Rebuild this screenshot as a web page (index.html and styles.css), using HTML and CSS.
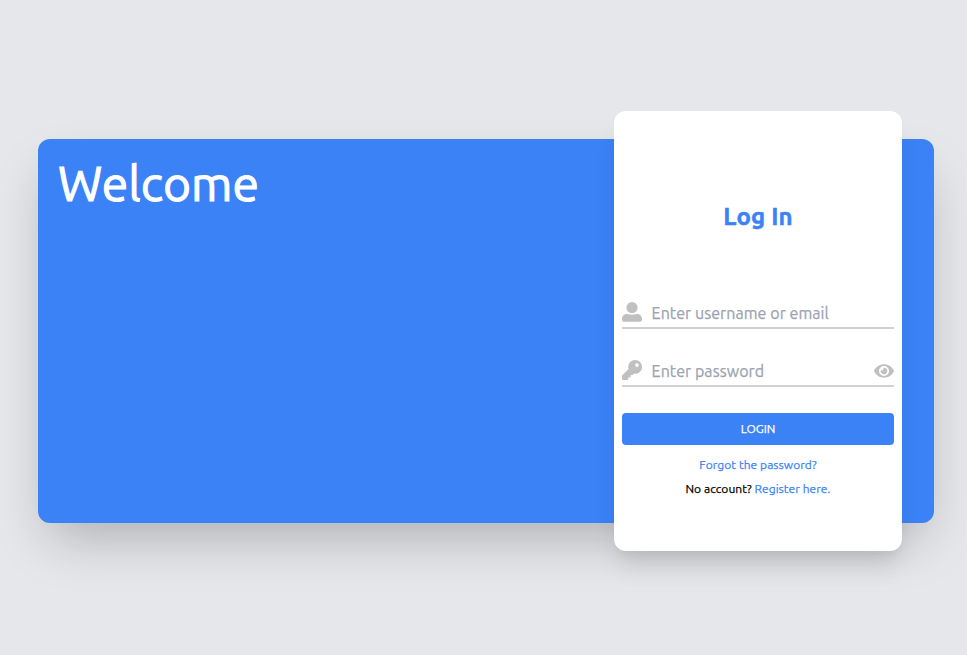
FILE: index.html
```html
<!DOCTYPE html>
<html lang="en">
<head>
<meta charset="utf-8">
<title>Log In</title>
<link rel="stylesheet" href="styles.css">
</head>
<body>
<main class="panel">
  <h1 class="welcome">Welcome</h1>
  <form class="card">
    <h2 class="title">Log In</h2>
    <div class="field">
      <svg class="icon" viewBox="0 0 20 20"><circle cx="10" cy="5.6" r="5.6"/><path d="M0 17.800v-1.200c0-2.800 2.400-4.600 5.200-4.600h.8c2.500 1.100 5.500 1.100 8 0h.8c2.800 0 5.200 1.800 5.200 4.600v1.200c0 1.200-.8 2-2 2H2c-1.200 0-2-.8-2-2z"/></svg>
      <span class="hint">Enter username or email</span>
    </div>
    <div class="field">
      <svg class="icon" viewBox="0 0 512 512"><path d="M512 176.001C512 273.203 433.202 352 336 352c-11.220 0-22.190-1.062-32.827-3.069l-24.012 27.014A23.999 23.999 0 0 1 261.223 384H224v40c0 13.255-10.745 24-24 24h-40v40c0 13.255-10.745 24-24 24H24c-13.255 0-24-10.745-24-24v-78.059c0-6.365 2.529-12.470 7.029-16.971l161.802-161.802C163.108 213.814 160 195.271 160 176 160 78.798 238.797.001 335.999 0 433.488-.001 512 78.511 512 176.001zM336 128c0 26.510 21.490 48 48 48s48-21.490 48-48-21.490-48-48-48-48 21.490-48 48z"/></svg>
      <span class="hint">Enter password</span>
      <svg class="icon eye" viewBox="0 0 576 512"><path d="M572.520 241.400C518.290 135.590 410.930 64 288 64S57.680 135.640 3.480 241.410a32.350 32.350 0 0 0 0 29.190C57.710 376.410 165.070 448 288 448s230.320-71.640 284.520-177.410a32.350 32.350 0 0 0 0-29.190zM288 400a144 144 0 1 1 144-144 143.930 143.930 0 0 1-144 144zm0-240a95.310 95.310 0 0 0-25.310 3.790 47.850 47.850 0 0 1-66.900 66.900A95.780 95.780 0 1 0 288 160z"/></svg>
    </div>
    <button class="login" type="button">LOGIN</button>
    <a class="link">Forgot the password?</a>
    <p class="link register">No account? <a class="blue">Register here.</a></p>
  </form>
</main>
</body>
</html>
```
FILE: styles.css
```css
* { box-sizing: border-box; margin: 0; padding: 0; }
body {
  min-height: 655px;
  padding: 111px 33px 0 38px;
  background: #e5e7eb;
  font-family: Ubuntu, "Noto Sans", sans-serif;
  -webkit-text-stroke: .25px currentColor;
  overflow: hidden;
}
.panel {
  display: flex;
  justify-content: space-between;
  height: 384px;
  margin-top: 28px;
  padding: 0 32px 0 20px;
  border-radius: 12px;
  background: #3b82f6;
  box-shadow: 0 25px 50px -12px rgba(0, 0, 0, .25);
}
.welcome { padding-top: 20px; font-size: 48px; font-weight: 400; line-height: 48px; color: #fff; -webkit-text-stroke: 1px #fff; }
.card {
  width: 288px;
  height: 440px;
  margin-top: -28px;
  padding: 90px 8px 0;
  border-radius: 12px;
  background: #fff;
  box-shadow: 0 20px 25px -5px rgba(0, 0, 0, .1), 0 10px 10px -5px rgba(0, 0, 0, .04);
}
.title { height: 32px; margin-bottom: 66px; font-size: 24px; letter-spacing: .15px; line-height: 32px; text-align: center; color: #3b82f6; -webkit-text-stroke: .5px #3b82f6; }
.field {
  display: flex;
  align-items: center;
  height: 30px;
  margin-bottom: 28px;
  padding-bottom: 2px;
  border-bottom: 2px solid #d1d1d1;
  color: #9ca3af;
}
.icon { flex: none; width: 20px; height: 20px; fill: #c0c0c0; }
.hint { margin-left: 9.600px; padding-top: 2px; font-size: 16px; letter-spacing: .07px; line-height: 24px; white-space: nowrap; }
.eye { margin: 2px 0 0 auto; }
.login {
  display: block;
  width: 100%;
  height: 32px;
  margin-top: -2px;
  border: 0;
  border-radius: 4px;
  background: #3b82f6;
  color: #fff;
  font: 12px/16px Ubuntu, "Noto Sans", sans-serif;
  -webkit-text-stroke: .25px #fff;
}
.link { display: block; margin-top: 12px; font-size: 12px; letter-spacing: .05px; line-height: 16px; text-align: center; color: #3b82f6; white-space: nowrap; }
.register { margin-top: 8px; color: #000; }
.blue { color: #3b82f6; }
.link, .blue { -webkit-text-stroke-color: currentColor; }
```
